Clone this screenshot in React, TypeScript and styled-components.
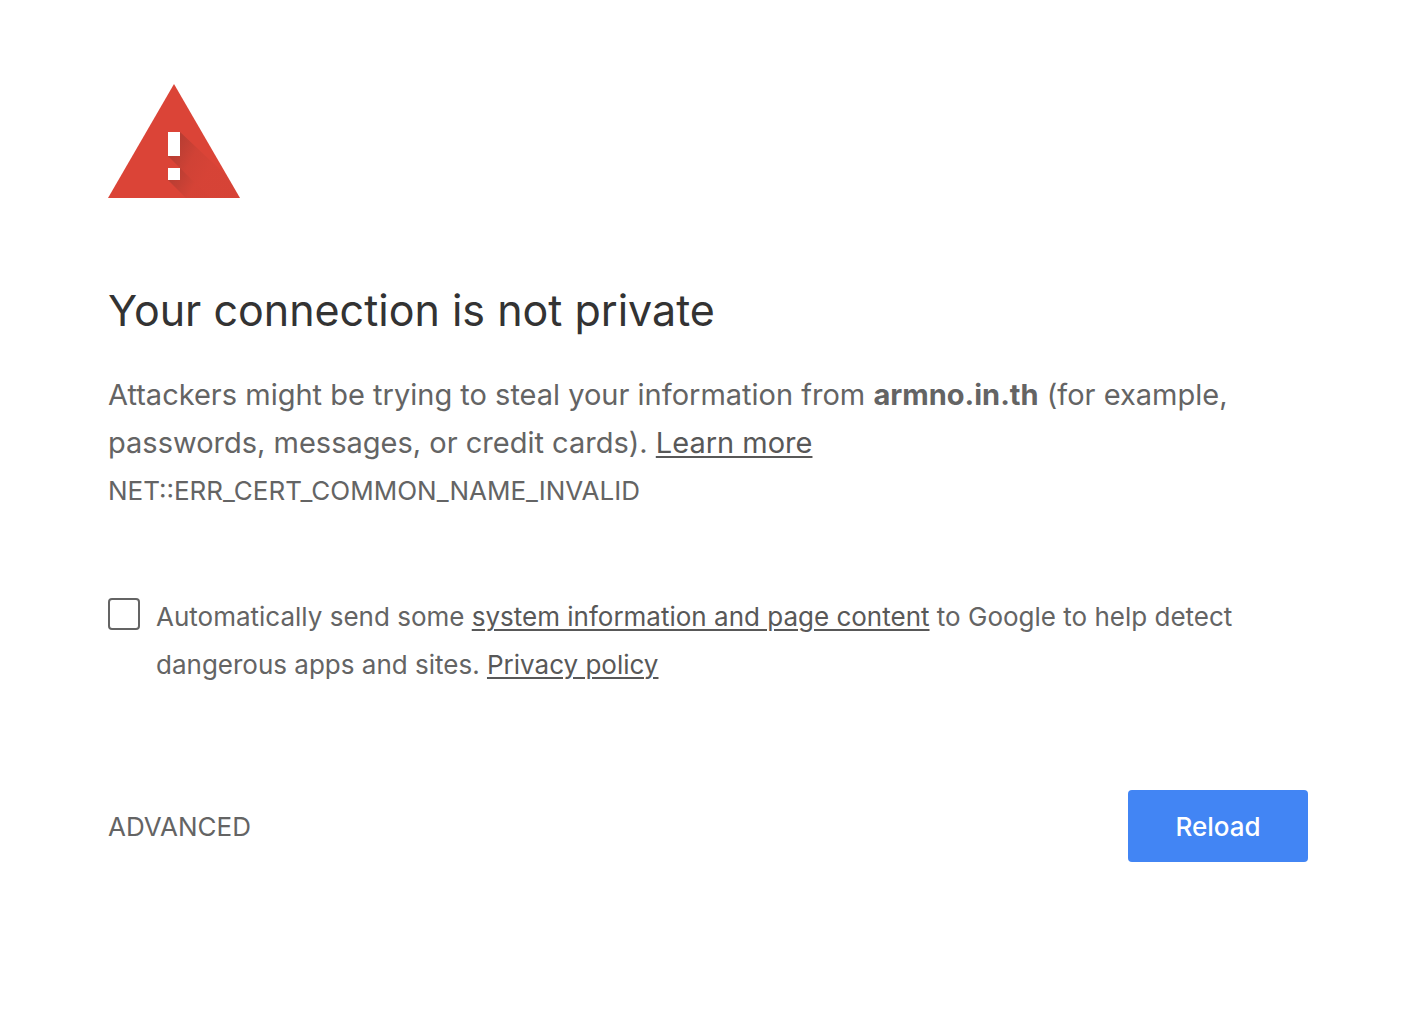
import React from "react";
import styled, { createGlobalStyle } from "styled-components";

const GlobalStyle = createGlobalStyle`
  *, *::before, *::after { box-sizing: border-box; }
  body {
    margin: 0;
    background: #fff;
    color: #646464;
    font-family: Inter, "Liberation Sans", sans-serif;
  }
`;

const Page = styled.main`
  max-width: 1420px;
  margin: 0 auto;
  padding: 84px 110px 120px 108px;
`;

const WarningIcon = styled.svg`
  display: block;
  width: 132px;
  height: 114px;
`;

const Title = styled.h1`
  margin: 82px 0 31px;
  color: #333;
  font-size: 43px;
  line-height: 60px;
  font-weight: 400;
`;

const Message = styled.p`
  margin: 0;
  font-size: 29px;
  line-height: 48px;
`;

const ErrorCode = styled.p`
  margin: 0;
  font-size: 26px;
  line-height: 48px;
`;

const TextLink = styled.a`
  color: #585858;
  text-decoration: underline;
  text-decoration-thickness: 2px;
  text-underline-offset: 3px;
`;

const OptIn = styled.div`
  display: flex;
  gap: 16px;
  margin-top: 78px;
  font-size: 26px;
  line-height: 48px;
`;

const Checkbox = styled.input`
  appearance: none;
  flex: none;
  width: 32px;
  height: 32px;
  margin: 5px 0 0;
  border: 2px solid #646464;
  border-radius: 4px;
  background: #fff;
`;

const Actions = styled.div`
  display: flex;
  align-items: center;
  justify-content: space-between;
  margin-top: 101px;
`;

const Button = styled.button<{ $primary?: boolean }>`
  height: 72px;
  min-width: ${(p) => (p.$primary ? "180px" : "0")};
  padding: ${(p) => (p.$primary ? "2px 40px 0" : "2px 0 0")};
  border: 0;
  border-radius: 4px;
  background: ${(p) => (p.$primary ? "#4285f4" : "transparent")};
  color: ${(p) => (p.$primary ? "#fff" : "#646464")};
  font: ${(p) => (p.$primary ? 500 : 400)} 26px/32px Inter, "Liberation Sans", sans-serif;
`;

export default function App() {
  return (
    <>
      <GlobalStyle />
      <Page>
        <WarningIcon viewBox="0 0 132 114" aria-hidden="true">
          <defs>
            <linearGradient id="shade" gradientUnits="userSpaceOnUse" x1="66" y1="66" x2="102" y2="84">
              <stop offset="0" stopColor="#3e2723" stopOpacity=".22" />
              <stop offset=".5" stopColor="#3e2723" stopOpacity=".07" />
              <stop offset="1" stopColor="#3e2723" stopOpacity=".03" />
            </linearGradient>
            <linearGradient id="shade-dot" gradientUnits="userSpaceOnUse" x1="66" y1="90" x2="86" y2="102">
              <stop offset="0" stopColor="#3e2723" stopOpacity=".22" />
              <stop offset="1" stopColor="#3e2723" stopOpacity=".04" />
            </linearGradient>
          </defs>
          <path d="M66 0 132 114H0Z" fill="#db4437" />
          <path d="M72 48 119 92 132 114H102L60 72H72Z" fill="url(#shade)" />
          <path d="M72 84 102 114H78L60 96H72Z" fill="url(#shade-dot)" />
          <path d="M60 48H72V72H60ZM60 84H72V96H60Z" fill="#fff" />
        </WarningIcon>
        <Title>Your connection is not private</Title>
        <Message>
          Attackers might be trying to steal your information from <strong>armno.in.th</strong> (for example,
          passwords, messages, or credit cards). <TextLink href="#learn">Learn more</TextLink>
        </Message>
        <ErrorCode>NET::ERR_CERT_COMMON_NAME_INVALID</ErrorCode>
        <OptIn>
          <Checkbox type="checkbox" id="report" />
          <label htmlFor="report">
            Automatically send some <TextLink href="#details">system information and page content</TextLink> to
            Google to help detect dangerous apps and sites. <TextLink href="#privacy">Privacy policy</TextLink>
          </label>
        </OptIn>
        <Actions>
          <Button type="button">ADVANCED</Button>
          <Button type="button" $primary>Reload</Button>
        </Actions>
      </Page>
    </>
  );
}
